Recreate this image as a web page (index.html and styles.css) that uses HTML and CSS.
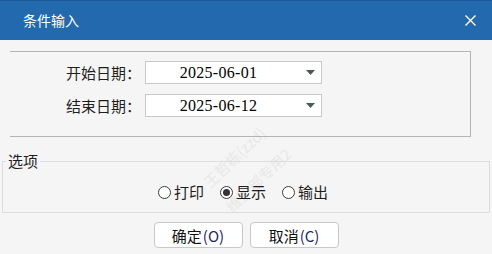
FILE: index.html
```html
<!DOCTYPE html>
<html>
<head>
    <title>条件输入</title>
    <link rel="stylesheet" href="styles.css">
</head>
<body>
    <div class="titlebar">
        <span class="title">条件输入</span>
        <svg class="close" width="11" height="11" viewBox="0 0 11 11">
            <path d="M0.5 0.5 L10.5 10.5 M10.5 0.5 L0.5 10.5" stroke="#fff" stroke-width="1.4" fill="none"/>
        </svg>
    </div>

    <div class="dates">
        <div class="row">
            <label>开始日期：</label>
            <div class="combo">
                <span class="value">2025-06-01</span>
                <svg width="9" height="5" viewBox="0 0 9 5"><path d="M0 0 H9 L4.5 5 Z" fill="#4b5a4f"/></svg>
            </div>
        </div>
        <div class="row">
            <label>结束日期：</label>
            <div class="combo">
                <span class="value">2025-06-12</span>
                <svg width="9" height="5" viewBox="0 0 9 5"><path d="M0 0 H9 L4.5 5 Z" fill="#4b5a4f"/></svg>
            </div>
        </div>
    </div>

    <fieldset class="options">
        <legend>选项</legend>
        <div class="radios">
            <span class="radio"><span class="dot"></span>打印</span>
            <span class="radio checked"><span class="dot"></span>显示</span>
            <span class="radio"><span class="dot"></span>输出</span>
        </div>
    </fieldset>

    <div class="buttons">
        <button>确定<span class="key">(O)</span></button>
        <button>取消<span class="key">(C)</span></button>
    </div>

    <div class="watermark">
        <span class="wm wm1">王哲栋(zzd)</span>
        <span class="wm wm2">维护部专用2</span>
    </div>
</body>
</html>
```

FILE: styles.css
```css
body {
    margin: 0;
    width: 492px;
    height: 254px;
    overflow: hidden;
    position: relative;
    background-color: #f5f5f5;
    font-family: "Noto Sans CJK SC", sans-serif;
    color: #1e1e1e;
}
.titlebar {
    height: 39px;
    border-top: 1px solid #1a5b97;
    background-color: #226aad;
    color: #fff;
    font-size: 14px;
    display: flex;
    align-items: center;
    justify-content: space-between;
    padding: 0 16px 0 23px;
}
.title {
    line-height: 20px;
    margin-top: -1px;
}
.dates {
    margin: 11px 21px 0 10px;
    border: 1px solid #b4b4b4;
    border-left: none;
    padding: 9px 0 19px;
    display: flex;
    flex-direction: column;
    gap: 10px;
}
.row {
    display: flex;
    align-items: center;
    height: 23px;
}
.row label {
    width: 131px;
    text-align: right;
    font-size: 15px;
    line-height: 20px;
}
.combo {
    margin-left: 4px;
    width: 177px;
    height: 23px;
    box-sizing: border-box;
    border: 1px solid #c9c9c9;
    background-color: #fff;
    display: flex;
    align-items: center;
}
.combo .value {
    flex: 1;
    text-align: center;
    padding-right: 15px;
    font-family: "Liberation Serif", serif;
    font-size: 16px;
    letter-spacing: 0.3px;
    color: #000;
}
.combo svg {
    margin-right: 6px;
}
.options {
    margin: 14px 2px 0 2px;
    border: 1px solid #dcdcdc;
    padding: 11px 0 10px;
    min-width: 0;
}
.options legend {
    margin-left: 3px;
    padding: 0 2px;
    font-size: 15px;
    line-height: 20px;
}
.radios {
    display: flex;
    justify-content: center;
    gap: 16px;
    height: 20px;
    padding-right: 6px;
}
.radio {
    display: flex;
    align-items: center;
    font-size: 15px;
    line-height: 20px;
}
.dot {
    width: 11px;
    height: 11px;
    border: 1px solid #3c3c3c;
    border-radius: 50%;
    background-color: #fff;
    margin-right: 3px;
    position: relative;
}
.checked .dot::after {
    content: "";
    position: absolute;
    left: 2px;
    top: 2px;
    width: 7px;
    height: 7px;
    border-radius: 50%;
    background-color: #333;
}
.buttons {
    margin-top: 9px;
    display: flex;
    justify-content: center;
    gap: 7px;
}
button {
    width: 89px;
    height: 26px;
    padding: 0;
    border: 1px solid #c8c8c8;
    border-radius: 4px;
    background-color: #fff;
    font-family: "Noto Sans CJK SC", sans-serif;
    font-size: 15px;
    color: #111;
}
.key {
    margin-left: 1px;
    color: #1c2a5c;
}
.watermark {
    position: absolute;
    left: 0;
    top: 0;
    width: 100%;
    height: 100%;
    z-index: -1;
    pointer-events: none;
}
.wm {
    position: absolute;
    font-size: 15px;
    color: #e8e8e8;
    white-space: nowrap;
    transform: translate(-50%, -50%) rotate(-44deg);
}
.wm1 {
    left: 234px;
    top: 157px;
}
.wm2 {
    left: 258px;
    top: 180px;
}
```
